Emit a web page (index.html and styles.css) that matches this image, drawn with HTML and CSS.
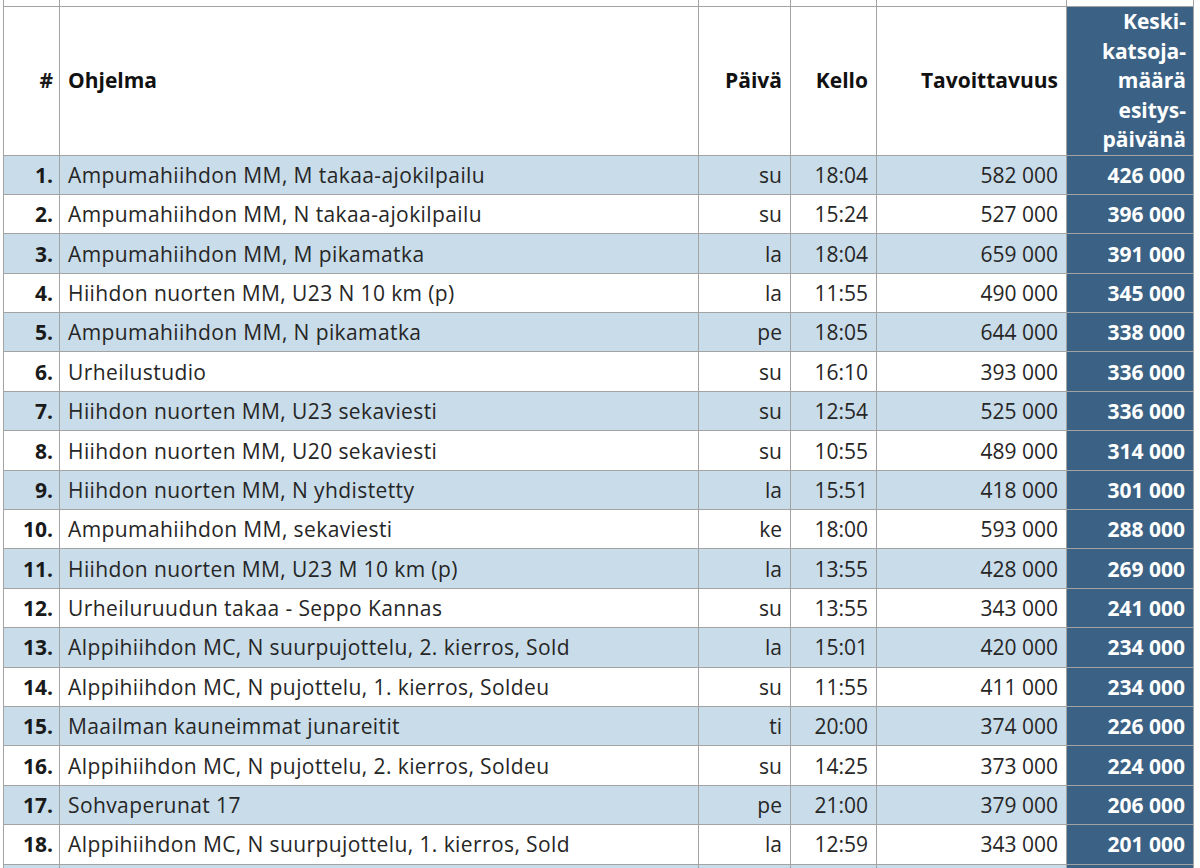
FILE: index.html
```html
<!DOCTYPE html>
<html lang="fi">
<head>
<meta charset="utf-8">
<title>Katsotuimmat ohjelmat</title>
<link rel="stylesheet" href="styles.css">
</head>
<body>
<table class="ratings">
  <colgroup>
    <col class="c-rank">
    <col class="c-name">
    <col class="c-day">
    <col class="c-time">
    <col class="c-reach">
    <col class="c-avg">
  </colgroup>
  <tbody>
    <tr class="prev"><td></td><td></td><td></td><td></td><td></td><td></td></tr>
    <tr class="head">
      <th class="num">#</th>
      <th class="left">Ohjelma</th>
      <th>Päivä</th>
      <th>Kello</th>
      <th>Tavoittavuus</th>
      <th class="avg">Keski-<br>katsoja-<br>määrä<br>esitys-<br>päivänä</th>
    </tr>
    <tr class="odd"><td class="num">1.</td><td class="left">Ampumahiihdon MM, M takaa-ajokilpailu</td><td>su</td><td>18:04</td><td>582 000</td><td class="avg">426 000</td></tr>
    <tr><td class="num">2.</td><td class="left">Ampumahiihdon MM, N takaa-ajokilpailu</td><td>su</td><td>15:24</td><td>527 000</td><td class="avg">396 000</td></tr>
    <tr class="odd"><td class="num">3.</td><td class="left">Ampumahiihdon MM, M pikamatka</td><td>la</td><td>18:04</td><td>659 000</td><td class="avg">391 000</td></tr>
    <tr><td class="num">4.</td><td class="left">Hiihdon nuorten MM, U23 N 10 km (p)</td><td>la</td><td>11:55</td><td>490 000</td><td class="avg">345 000</td></tr>
    <tr class="odd"><td class="num">5.</td><td class="left">Ampumahiihdon MM, N pikamatka</td><td>pe</td><td>18:05</td><td>644 000</td><td class="avg">338 000</td></tr>
    <tr><td class="num">6.</td><td class="left">Urheilustudio</td><td>su</td><td>16:10</td><td>393 000</td><td class="avg">336 000</td></tr>
    <tr class="odd"><td class="num">7.</td><td class="left">Hiihdon nuorten MM, U23 sekaviesti</td><td>su</td><td>12:54</td><td>525 000</td><td class="avg">336 000</td></tr>
    <tr><td class="num">8.</td><td class="left">Hiihdon nuorten MM, U20 sekaviesti</td><td>su</td><td>10:55</td><td>489 000</td><td class="avg">314 000</td></tr>
    <tr class="odd"><td class="num">9.</td><td class="left">Hiihdon nuorten MM, N yhdistetty</td><td>la</td><td>15:51</td><td>418 000</td><td class="avg">301 000</td></tr>
    <tr><td class="num">10.</td><td class="left">Ampumahiihdon MM, sekaviesti</td><td>ke</td><td>18:00</td><td>593 000</td><td class="avg">288 000</td></tr>
    <tr class="odd"><td class="num">11.</td><td class="left">Hiihdon nuorten MM, U23 M 10 km (p)</td><td>la</td><td>13:55</td><td>428 000</td><td class="avg">269 000</td></tr>
    <tr><td class="num">12.</td><td class="left">Urheiluruudun takaa - Seppo Kannas</td><td>su</td><td>13:55</td><td>343 000</td><td class="avg">241 000</td></tr>
    <tr class="odd"><td class="num">13.</td><td class="left">Alppihiihdon MC, N suurpujottelu, 2. kierros, Sold</td><td>la</td><td>15:01</td><td>420 000</td><td class="avg">234 000</td></tr>
    <tr><td class="num">14.</td><td class="left">Alppihiihdon MC, N pujottelu, 1. kierros, Soldeu</td><td>su</td><td>11:55</td><td>411 000</td><td class="avg">234 000</td></tr>
    <tr class="odd"><td class="num">15.</td><td class="left">Maailman kauneimmat junareitit</td><td>ti</td><td>20:00</td><td>374 000</td><td class="avg">226 000</td></tr>
    <tr><td class="num">16.</td><td class="left">Alppihiihdon MC, N pujottelu, 2. kierros, Soldeu</td><td>su</td><td>14:25</td><td>373 000</td><td class="avg">224 000</td></tr>
    <tr class="odd"><td class="num">17.</td><td class="left">Sohvaperunat 17</td><td>pe</td><td>21:00</td><td>379 000</td><td class="avg">206 000</td></tr>
    <tr><td class="num">18.</td><td class="left">Alppihiihdon MC, N suurpujottelu, 1. kierros, Sold</td><td>la</td><td>12:59</td><td>343 000</td><td class="avg">201 000</td></tr>
    <tr class="odd next"><td class="num"></td><td class="left"></td><td></td><td></td><td></td><td class="avg"></td></tr>
  </tbody>
</table>
</body>
</html>
```

FILE: styles.css
```css
html, body {
  margin: 0;
  padding: 0;
  background: #ffffff;
}

body {
  padding-left: 3px;
  font-family: "Open Sans", "DejaVu Sans", sans-serif;
  font-size: 21px;
  color: #262626;
  overflow: hidden;
}

.ratings {
  border-collapse: collapse;
  table-layout: fixed;
  width: 1190px;
}

.c-rank { width: 56px; }
.c-name { width: 639px; }
.c-day { width: 92px; }
.c-time { width: 86px; }
.c-reach { width: 190px; }
.c-avg { width: 127px; }

.ratings td,
.ratings th {
  border: 1px solid #a3a3a3;
  padding: 5.3px 8px 3.9px;
  line-height: 29.2px;
  text-align: right;
  white-space: nowrap;
  overflow: hidden;
}

.ratings .prev td {
  border-top: none;
  height: 6px;
  padding: 0;
  line-height: 0;
}

.ratings .next td {
  height: 29.2px;
}

.ratings th {
  padding: 0 8px;
  line-height: 29.5px;
  font-weight: 700;
  color: #111111;
  vertical-align: middle;
}

.ratings .left {
  text-align: left;
}

.ratings td.left {
  letter-spacing: 0.4px;
}

.ratings .num {
  font-weight: 700;
  color: #1a1a1a;
  padding-right: 6px;
  padding-left: 4px;
}

.ratings tr.odd td {
  background: #c9dce9;
}

.ratings .head th.avg,
.ratings tr td.avg,
.ratings tr.odd td.avg {
  background: #3b6285;
  color: #ffffff;
  font-weight: 700;
}

.ratings .head th.avg {
  padding-right: 7px;
}
```
